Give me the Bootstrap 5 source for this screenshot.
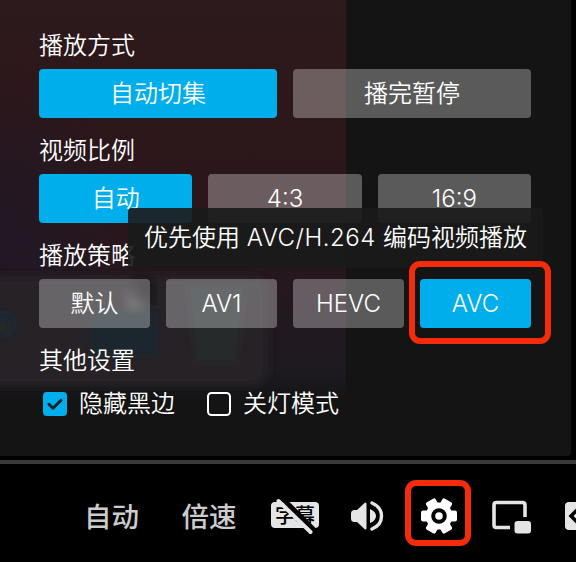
<!DOCTYPE html>
<html lang="zh-CN">
<head>
<meta charset="utf-8">
<meta name="viewport" content="width=device-width, initial-scale=1">
<title>播放设置</title>
<link href="https://cdn.jsdelivr.net/npm/bootstrap@5.3.0/dist/css/bootstrap.min.css" rel="stylesheet">
<style>
body{width:576px;height:562px;background:#000;font-family:Inter,"Noto Sans CJK SC",sans-serif;font-size:24px;font-weight:350;color:#fff;overflow:hidden}
.settings-panel{width:571px;height:456px;background:#141414;border-radius:0 0 4px 0;padding:21px 40px 0 39px;overflow:hidden;isolation:isolate}
.backdrop-art{left:0;top:0;width:346px;height:400px;z-index:-1}
.section-title{height:48px;line-height:49px}
.option-row{gap:16px;margin-bottom:8px}
.option-btn{--bs-btn-padding-x:0;--bs-btn-padding-y:0;--bs-btn-border-width:0;--bs-btn-color:#fff;--bs-btn-bg:rgba(255,255,255,.3);--bs-btn-font-size:24px;--bs-btn-font-weight:350;--bs-btn-border-radius:4px;--bs-btn-line-height:50px;flex:1 1 0;height:49px}
.option-btn.active{--bs-btn-active-bg:#00aeec;--bs-btn-active-color:#fff}
.check-row{height:40px;padding-left:4px;gap:32px}
.check-item{gap:12px;line-height:40px}
.hint{left:128px;top:208px;width:415px;height:60px;line-height:60px;padding-left:16px;background:rgba(26,26,26,.91);border-radius:4px;white-space:nowrap}
.hint-codec{letter-spacing:.5px}
.callout{border:6px solid #f52c0b;border-radius:11px}
.callout-host{z-index:2}
.callout-avc{inset:-18px -20px -16px -11px}
.callout-gear{inset:-4px}
.progress-track{height:4px;margin-top:4px;background:#3a3a3a}
.control-bar{width:576px;height:98px;padding-left:84px;color:#ccc;font-size:27.5px;font-weight:500;overflow:hidden}
.control-bar svg{display:block}
.control-bar>*{flex:none}
.w-text{width:97.5px;line-height:40px;margin-top:7px}
.w-speed{width:88px}
.w-sub{width:80px;margin-top:6px}.w-vol{width:59.500px;margin-top:6px}.w-gear{width:58px;height:58px;margin-right:25px;padding:5px 0 0 2px}.w-pip{width:73px;margin-top:7px}.w-wide{margin-top:6px}
</style>
</head>
<body>
<main class="settings-panel position-relative">
  <svg class="backdrop-art position-absolute" viewBox="0 0 346 400" aria-hidden="true">
    <defs>
      <linearGradient id="wall" x2="0" y2="1"><stop offset="0" stop-color="#2c1a1c"/><stop offset=".25" stop-color="#2d171a"/><stop offset=".55" stop-color="#2a161c"/><stop offset=".75" stop-color="#24181f"/><stop offset=".93" stop-color="#1c1a20"/><stop offset="1" stop-color="#141414"/></linearGradient>
      <radialGradient id="side" gradientUnits="userSpaceOnUse" cx="0" cy="0" r="1" gradientTransform="translate(0 230) scale(130 170)"><stop offset="0" stop-color="#1f1826" stop-opacity=".8"/><stop offset="1" stop-color="#1f1826" stop-opacity="0"/></radialGradient>
      <filter id="soft" x="-30%" y="-30%" width="160%" height="160%"><feGaussianBlur stdDeviation="4"/></filter>
    </defs>
    <path fill="url(#wall)" d="M0 0h346v400H0z"/>
    <path fill="url(#side)" d="M0 0h346v400H0z"/>
    <g filter="url(#soft)">
      <rect x="-30" y="276" width="298" height="110" rx="16" fill="#252027"/>
      <circle cx="2" cy="325" r="15" fill="#1a2831"/><circle cx="1" cy="327" r="6" fill="#292b19"/>
      <rect x="90" y="308" width="68" height="50" rx="6" fill="#1b272e"/>
      <path d="M130 278h24v34z" fill="#191719"/>
      <path d="M126 284q2 17 22 22l-20 4z" fill="#433f41"/>
      <path d="M187 286h59l-9 77h-42z" fill="#262929"/>
    </g>
  </svg>

  <section>
    <div class="section-title">播放方式</div>
    <div class="option-row d-flex"><button class="btn option-btn active">自动切集</button><button class="btn option-btn">播完暂停</button></div>
  </section>
  <section>
    <div class="section-title">视频比例</div>
    <div class="option-row d-flex"><button class="btn option-btn active">自动</button><button class="btn option-btn">4:3</button><button class="btn option-btn">16:9</button></div>
  </section>
  <section>
    <div class="section-title">播放策略</div>
    <div class="option-row d-flex"><button class="btn option-btn">默认</button><button class="btn option-btn">AV1</button><button class="btn option-btn">HEVC</button><button class="btn option-btn active position-relative callout-host">AVC<span class="callout callout-avc position-absolute"></span></button></div>
  </section>
  <section>
    <div class="section-title">其他设置</div>
    <div class="check-row d-flex align-items-center">
      <div class="check-item d-flex align-items-center"><svg width="24" height="24"><rect width="24" height="24" rx="4" fill="#00aeec"/><path d="M6 12.3l4 3.9 8-8" fill="none" stroke="#10222b" stroke-width="3" stroke-linecap="round" stroke-linejoin="round"/></svg><span>隐藏黑边</span></div>
      <div class="check-item d-flex align-items-center"><svg width="24" height="24"><rect x="1" y="1" width="22" height="22" rx="3.5" fill="none" stroke="#fff" stroke-width="2"/></svg><span>关灯模式</span></div>
    </div>
  </section>
  <div class="hint position-absolute">优先使用 <span class="hint-codec">AVC/H.264 </span>编码视频播放</div>
</main>
<div class="progress-track"></div>
<footer class="control-bar d-flex align-items-center">
  <span class="w-text">自动</span>
  <span class="w-text w-speed">倍速</span>
  <span class="w-sub"><svg width="50" height="38" viewBox="0 0 50 38"><rect x="1" y="5" width="48" height="26" rx="4" fill="#e5e5e5"/><text x="5" y="25.500" font-family="Noto Sans CJK SC" font-size="20" font-weight="500" fill="#000">字幕</text><path d="M13 2l32 32" stroke="#000" stroke-width="5"/><path d="M8.500 4l32 31" stroke="#e5e5e5" stroke-width="4" stroke-linecap="round"/></svg></span>
  <span class="w-vol"><svg width="36" height="32" viewBox="0 0 36 32"><path d="M4.500 10H7l7.500-7q2-1.500 2 1v24q0 2.500-2 1L7 22H4.500Q1 22 1 18.500v-5Q1 10 4.500 10z" fill="#e5e5e5"/><path d="M20 9q6 2.500 6 7t-6 7z" fill="#e5e5e5"/><path d="M22 3q9.500 4 9.500 13T22 29" fill="none" stroke="#e5e5e5" stroke-width="3.400" stroke-linecap="round"/></svg></span>
  <span class="w-gear position-relative d-flex align-items-center justify-content-center"><svg width="36" height="36" viewBox="-18 -18 36 36"><g fill="#fff"><circle r="13.500"/><path id="tooth" d="M-18-3.500q0-2 2-2h32q2 0 2 2v7q0 2-2 2h-32q-2 0-2-2z"/><use href="#tooth" transform="rotate(60)"/><use href="#tooth" transform="rotate(120)"/></g><circle r="5.800" fill="#fff" stroke="#000" stroke-width="4"/></svg><span class="callout callout-gear position-absolute"></span></span>
  <span class="w-pip"><svg width="40" height="34" viewBox="0 0 40 34"><path d="M33 17V5q0-2.500-2.500-2.500h-26Q2 2.500 2 5v20q0 2.500 2.500 2.500H18" fill="none" stroke="#e5e5e5" stroke-width="3.600"/><rect x="22.500" y="21" width="16.500" height="12.500" rx="3" fill="#e5e5e5"/></svg></span>
  <svg class="w-wide" width="11" height="30" viewBox="0 0 11 30"><rect y="1" width="38" height="28" rx="4" fill="#e5e5e5"/><path d="M13 8l-7 7 7 7" fill="none" stroke="#000" stroke-width="3.500"/></svg>
</footer>
<script src="https://cdn.jsdelivr.net/npm/bootstrap@5.3.0/dist/js/bootstrap.bundle.min.js"></script>
</body>
</html>
